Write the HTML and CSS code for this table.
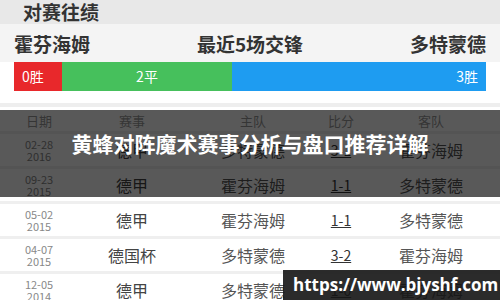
FILE: index.html
```html
<!DOCTYPE html>
<html lang="zh">
<head>
<meta charset="utf-8">
<link rel="stylesheet" href="styles.css">
</head>
<body>
<div class="page">
  <div class="section-title">对赛往绩</div>
  <div class="teams">
    <span class="team">霍芬海姆</span>
    <span class="team">最近5场交锋</span>
    <span class="team">多特蒙德</span>
  </div>
  <div class="bar">
    <div class="seg win-l">0胜</div>
    <div class="seg draw">2平</div>
    <div class="seg win-r">3胜</div>
  </div>
  <div class="divider"></div>
  <div class="table">
    <div class="row head">
      <span>日期</span><span>赛事</span><span>主队</span><span>比分</span><span>客队</span>
    </div>
    <div class="row">
      <span class="date">02-28<br>2016</span><span class="comp">德甲</span><span class="tm">多特蒙德</span><span class="score">3-1</span><span class="tm">霍芬海姆</span>
    </div>
    <div class="row">
      <span class="date">09-23<br>2015</span><span class="comp">德甲</span><span class="tm">霍芬海姆</span><span class="score">1-1</span><span class="tm">多特蒙德</span>
    </div>
    <div class="row">
      <span class="date">05-02<br>2015</span><span class="comp">德甲</span><span class="tm">霍芬海姆</span><span class="score">1-1</span><span class="tm">多特蒙德</span>
    </div>
    <div class="row">
      <span class="date">04-07<br>2015</span><span class="comp">德国杯</span><span class="tm">多特蒙德</span><span class="score">3-2</span><span class="tm">霍芬海姆</span>
    </div>
    <div class="row">
      <span class="date">12-05<br>2014</span><span class="comp">德甲</span><span class="tm">多特蒙德</span><span class="score">1-0</span><span class="tm">霍芬海姆</span>
    </div>
  </div>
  <div class="band"><h1 class="headline">黄蜂对阵魔术赛事分析与盘口推荐详解</h1></div>
  <div class="watermark">https://www.bjyshf.com</div>
</div>
</body>
</html>
```
FILE: styles.css
```css
html, body {
  margin: 0;
  padding: 0;
  background: #fff;
}
.page {
  position: relative;
  width: 500px;
  height: 300px;
  overflow: hidden;
  font-family: "Noto Sans CJK SC", "Noto Sans", sans-serif;
  color: #333;
}
.section-title {
  height: 24px;
  background: #e8e8e8;
  padding-left: 23px;
  font-size: 19px;
  font-weight: bold;
  line-height: 24px;
  color: #333;
}
.teams {
  height: 38px;
  background: #f4f4f4;
  display: flex;
  justify-content: space-between;
  align-items: center;
  padding: 0 14px;
}
.team {
  font-size: 19px;
  font-weight: bold;
  color: #333;
}
.bar {
  display: flex;
  height: 29px;
  margin: 0 14px;
}
.seg {
  color: #fff;
  font-size: 14px;
  line-height: 29px;
}
.win-l {
  width: 48px;
  background: #e8282b;
  padding-left: 8px;
  box-sizing: border-box;
}
.draw {
  width: 170px;
  background: #46c05c;
  text-align: center;
}
.win-r {
  flex: 1;
  background: #1e9cf1;
  text-align: right;
  padding-right: 8px;
}
.divider {
  height: 4px;
  background: #eeeeee;
  margin-top: 12px;
  margin-bottom: 3px;
}
.table {
  display: flex;
  flex-direction: column;
}
.row {
  display: grid;
  grid-template-columns: 78px 108px 134px 42px 138px;
  align-items: center;
  justify-items: center;
  height: 32px;
  border-top: 3px solid #efefef;
}
.row.head {
  height: 21px;
  border-top: none;
  font-size: 13px;
  color: #999;
}
.date {
  font-size: 11px;
  line-height: 12px;
  color: #888;
  text-align: center;
}
.comp {
  font-size: 16px;
  color: #444;
}
.tm {
  font-size: 16px;
  color: #555;
}
.score {
  font-size: 14px;
  color: #333;
  text-decoration: underline;
}
.band {
  position: absolute;
  left: 0;
  top: 110px;
  width: 500px;
  height: 87px;
  background: rgba(0, 0, 0, 0.65);
}
.headline {
  margin: 0;
  padding-top: 20px;
  text-align: center;
  font-size: 21px;
  line-height: 27px;
  font-weight: bold;
  color: #fff;
}
.watermark {
  position: absolute;
  left: 283px;
  top: 270px;
  width: 217px;
  height: 30px;
  box-sizing: border-box;
  padding-left: 10px;
  background: rgba(20, 20, 20, 0.9);
  color: #fff;
  font-family: "Open Sans", "DejaVu Sans", sans-serif;
  font-weight: bold;
  font-size: 17px;
  line-height: 30px;
  white-space: nowrap;
}
```
